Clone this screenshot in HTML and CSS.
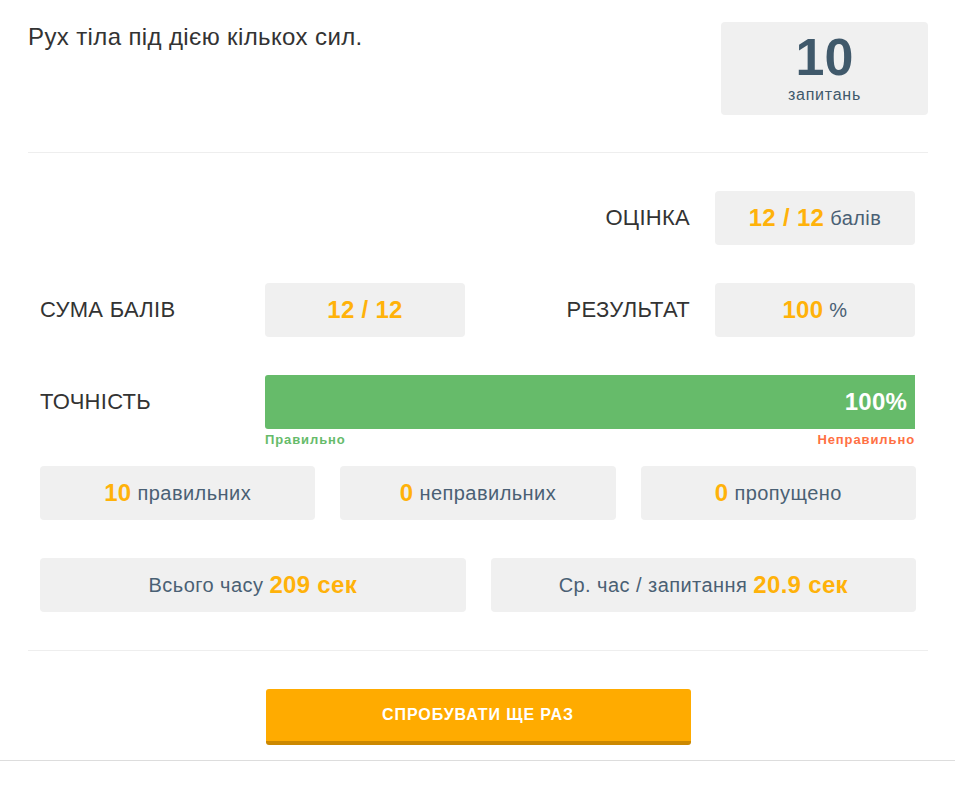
FILE: index.html
```html
<!DOCTYPE html>
<html lang="uk">
<head>
<meta charset="utf-8">
<link rel="stylesheet" href="styles.css">
</head>
<body>
<div class="page">
  <div class="header">
    <h1 class="title">Рух тіла під дією кількох сил.</h1>
    <div class="count-box">
      <div class="count-num">10</div>
      <div class="count-label">запитань</div>
    </div>
  </div>
  <div class="divider"></div>
  <div class="stats">
    <div class="grid4">
      <div></div>
      <div></div>
      <div class="label right">ОЦІНКА</div>
      <div class="box"><span class="num">12 / 12</span> балів</div>

      <div class="label">СУМА БАЛІВ</div>
      <div class="box"><span class="num">12 / 12</span></div>
      <div class="label right">РЕЗУЛЬТАТ</div>
      <div class="box"><span class="num">100</span> %</div>

      <div class="label">ТОЧНІСТЬ</div>
      <div class="bar-wrap">
        <div class="bar"><span class="bar-text">100%</span></div>
        <div class="bar-legend">
          <span class="ok">Правильно</span>
          <span class="bad">Неправильно</span>
        </div>
      </div>
    </div>
    <div class="grid3">
      <div class="box"><span class="num">10</span> правильних</div>
      <div class="box"><span class="num">0</span> неправильних</div>
      <div class="box"><span class="num">0</span> пропущено</div>
    </div>
    <div class="grid2">
      <div class="box">Всього часу <span class="num">209 сек</span></div>
      <div class="box">Ср. час / запитання <span class="num">20.9 сек</span></div>
    </div>
  </div>
  <div class="divider"></div>
  <div class="actions">
    <button class="retry">СПРОБУВАТИ ЩЕ РАЗ</button>
  </div>
</div>
<div class="bottom-line"></div>
</body>
</html>
```
FILE: styles.css
```css
html, body {
  margin: 0;
  padding: 0;
  background: #fff;
}
body {
  font-family: "Liberation Sans", Arial, sans-serif;
  color: #333;
}
.page {
  padding: 0 27px 0 28px;
}
.header {
  display: flex;
  justify-content: space-between;
  align-items: flex-start;
  padding-top: 22px;
  padding-bottom: 37px;
}
.title {
  margin: 2px 0 0;
  font-size: 24px;
  letter-spacing: 0.38px;
  font-weight: normal;
  color: #333;
  line-height: 26px;
}
.count-box {
  width: 207px;
  height: 93px;
  background: #f0f0f0;
  border-radius: 4px;
  display: flex;
  flex-direction: column;
  align-items: center;
  justify-content: center;
  color: #40596b;
  box-sizing: border-box;
  padding-bottom: 3px;
}
.count-num {
  font-size: 52px;
  font-weight: bold;
  line-height: 52px;
}
.count-label {
  margin-top: 4px;
  font-size: 16px;
  letter-spacing: 0.75px;
  line-height: 16px;
}
.divider {
  height: 1px;
  background: #eeeeee;
}
.stats {
  padding: 38px 12px 38px;
}
.grid4 {
  display: grid;
  grid-template-columns: 200px 200px 200px 200px;
  column-gap: 25px;
  row-gap: 38px;
}
.label {
  font-size: 22px;
  letter-spacing: 0.28px;
  color: #333;
  display: flex;
  align-items: center;
  height: 54px;
}
.label.right {
  justify-content: flex-end;
}
.box {
  background: #f0f0f0;
  border-radius: 4px;
  height: 54px;
  display: flex;
  align-items: center;
  justify-content: center;
  font-size: 20px;
  letter-spacing: 0.45px;
  color: #4a6074;
  white-space: pre;
}
.num {
  color: #ffb20a;
  font-weight: bold;
  font-size: 24px;
  letter-spacing: 0.3px;
}
.bar-wrap {
  grid-column: 2 / span 3;
}
.bar {
  height: 54px;
  background: #66bb6a;
  border-radius: 3px 0 0 3px;
  display: flex;
  align-items: center;
  justify-content: flex-end;
  padding-right: 8px;
}
.bar-text {
  color: #fff;
  font-weight: bold;
  font-size: 24px;
  letter-spacing: 0.2px;
}
.bar-legend {
  display: flex;
  justify-content: space-between;
  font-size: 13px;
  letter-spacing: 0.9px;
  font-weight: bold;
  margin-top: 3px;
  line-height: 15px;
}
.ok { color: #66bb6a; }
.bad { color: #ff7043; }
.grid3 {
  margin-top: 19px;
  display: grid;
  grid-template-columns: repeat(3, 1fr);
  column-gap: 25px;
}
.grid2 {
  margin-top: 38px;
  display: grid;
  grid-template-columns: repeat(2, 1fr);
  column-gap: 25px;
}
.actions {
  display: flex;
  justify-content: center;
  padding-top: 38px;
  padding-bottom: 15px;
}
.retry {
  width: 425px;
  height: 56px;
  background: #ffab00;
  border: none;
  border-bottom: 4px solid #cc8800;
  border-radius: 3px;
  color: #fff;
  font-family: "Liberation Sans", Arial, sans-serif;
  font-weight: bold;
  font-size: 16px;
  letter-spacing: 0.9px;
  padding: 0;
}
.bottom-line {
  height: 1px;
  background: #dddddd;
}
```
